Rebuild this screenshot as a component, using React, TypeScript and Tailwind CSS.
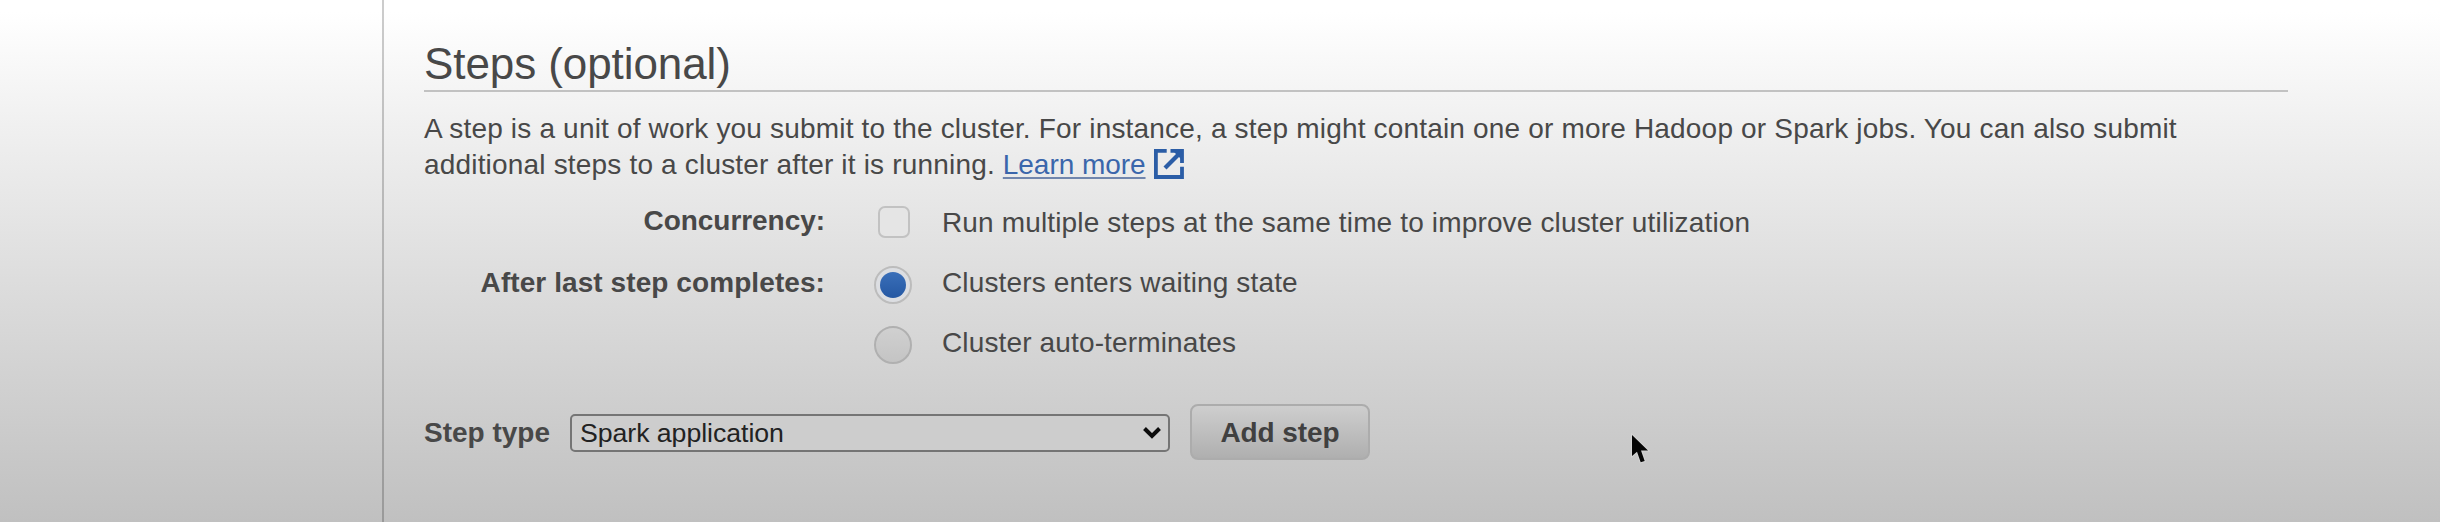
import type { ReactNode } from "react";

function FormRow({ label, control, children }: { label?: string; control: ReactNode; children: ReactNode }) {
  return (
    <div className="grid h-9 grid-cols-[401px_117px_1fr] items-start whitespace-nowrap leading-9">
      <div className="text-right font-bold tracking-[0.08px]">{label}</div>
      <div className="flex h-9 items-center justify-center pl-[19px]">{control}</div>
      <label className="tracking-[0.14px]">{children}</label>
    </div>
  );
}

function Radio({ checked = false }: { checked?: boolean }) {
  return checked ? (
    <span role="radio" aria-checked="true" className="mt-1 flex size-[38px] shrink-0 items-center justify-center rounded-full border-2 border-[#bcbcbc] bg-[#dcdee2]">
      <span className="size-[26px] rounded-full bg-linear-to-b from-[#3a6fb9] to-[#2558a3]" />
    </span>
  ) : (
    <span role="radio" aria-checked="false" className="mt-1 size-[38px] shrink-0 rounded-full border-2 border-[#b0b0b0] bg-linear-to-b from-[#d0d0d0] to-[#c4c4c4]" />
  );
}

function ExternalIcon() {
  return (
    <svg className="ml-2 inline-block size-[30px] align-[-5px]" viewBox="0 0 30 30" fill="none" stroke="#2b5da6">
      <path d="M12.7 1.9H1.9V28H28V17.7" strokeWidth="3.8" />
      <path d="M16.5 1.9H28V14" strokeWidth="3.8" />
      <path d="M20 3L27 10V3Z" fill="#2b5da6" stroke="none" />
      <path d="M27 3L11 19" strokeWidth="4.2" />
    </svg>
  );
}

export default function App() {
  return (
    <div className="relative flex h-[522px] w-[2440px] overflow-hidden bg-[linear-gradient(to_bottom,#ffffff_0px,#ffffff_12px,#fafafa_50px,#f0f0f0_125px,#e7e7e7_200px,#dddddd_280px,#d0d0d0_390px,#c0c0c0_522px)] font-['Liberation_Sans',Arial,sans-serif] text-[28px] text-[#484848]">
      <aside className="w-[384px] shrink-0 border-r-2 border-black/20" />
      <main className="flex w-[1904px] flex-col pt-10 pl-10">
        <h1 className="h-[52px] border-b-2 border-[#c2c2c2] text-[44px] leading-[47px] tracking-[-0.08px]">Steps (optional)</h1>
        <p className="mt-[19px] whitespace-nowrap leading-9 tracking-[0.18px]">
          A step is a unit of work you submit to the cluster. For instance, a step might contain one or more Hadoop or Spark jobs. You can also submit
          <br />
          additional steps to a cluster after it is running.{" "}
          <a className="tracking-[-0.05px] text-[#3a66ab] underline decoration-[#7186ad] decoration-2 underline-offset-[3px]">Learn more</a>
          <ExternalIcon />
        </p>
        <div className="mt-[22px] flex flex-col gap-6">
          <div className="grid h-9 grid-cols-[401px_117px_1fr] whitespace-nowrap leading-9">
            <div className="-mt-0.5 text-right font-bold tracking-[-0.05px]">Concurrency:</div>
            <div className="flex items-center justify-center pb-0.5 pl-[21px]">
              <span role="checkbox" aria-checked="false" className="size-8 rounded-[7px] border-2 border-[#c2c2c2] bg-[#e5e5e5]" />
            </div>
            <label className="tracking-[0.15px]">Run multiple steps at the same time to improve cluster utilization</label>
          </div>
          <FormRow label="After last step completes:" control={<Radio checked />}>Clusters enters waiting state</FormRow>
          <FormRow control={<Radio />}>Cluster auto-terminates</FormRow>
        </div>
        <div className="mt-[43px] flex h-14 items-center whitespace-nowrap">
          <span className="w-[146px] pt-0.5 font-bold leading-9">Step type</span>
          <div role="combobox" className="mt-0.5 flex h-[38px] w-[600px] items-center justify-between rounded-[5px] border-2 border-[#757575] bg-[#cdcdcd] pr-[7px] pl-2 text-[26.7px] tracking-[-0.05px] text-[#222222]">
            <span className="leading-9">Spark application</span>
            <svg className="size-[18px]" viewBox="0 0 18 18" fill="none" stroke="#0c0c0c" strokeWidth="4">
              <path d="M1.5 4.5L9 12L16.5 4.5" />
            </svg>
          </div>
          <button className="ml-5 h-14 w-[180px] rounded-[8px] border-2 border-[#acacac] bg-linear-to-b from-[#cecece] to-[#afafaf] pt-px text-[28px] font-bold tracking-[-0.1px] text-[#404040]">
            Add step
          </button>
        </div>
      </main>
      <svg className="absolute top-[430px] left-[1628px] h-9 w-6" viewBox="0 0 24 36">
        <path d="M4 5V26L9 21.8L12.7 32.3L16.7 31L13 20.4H20Z" fill="#050505" stroke="#d4d4d4" strokeWidth="2" paintOrder="stroke" />
      </svg>
    </div>
  );
}
